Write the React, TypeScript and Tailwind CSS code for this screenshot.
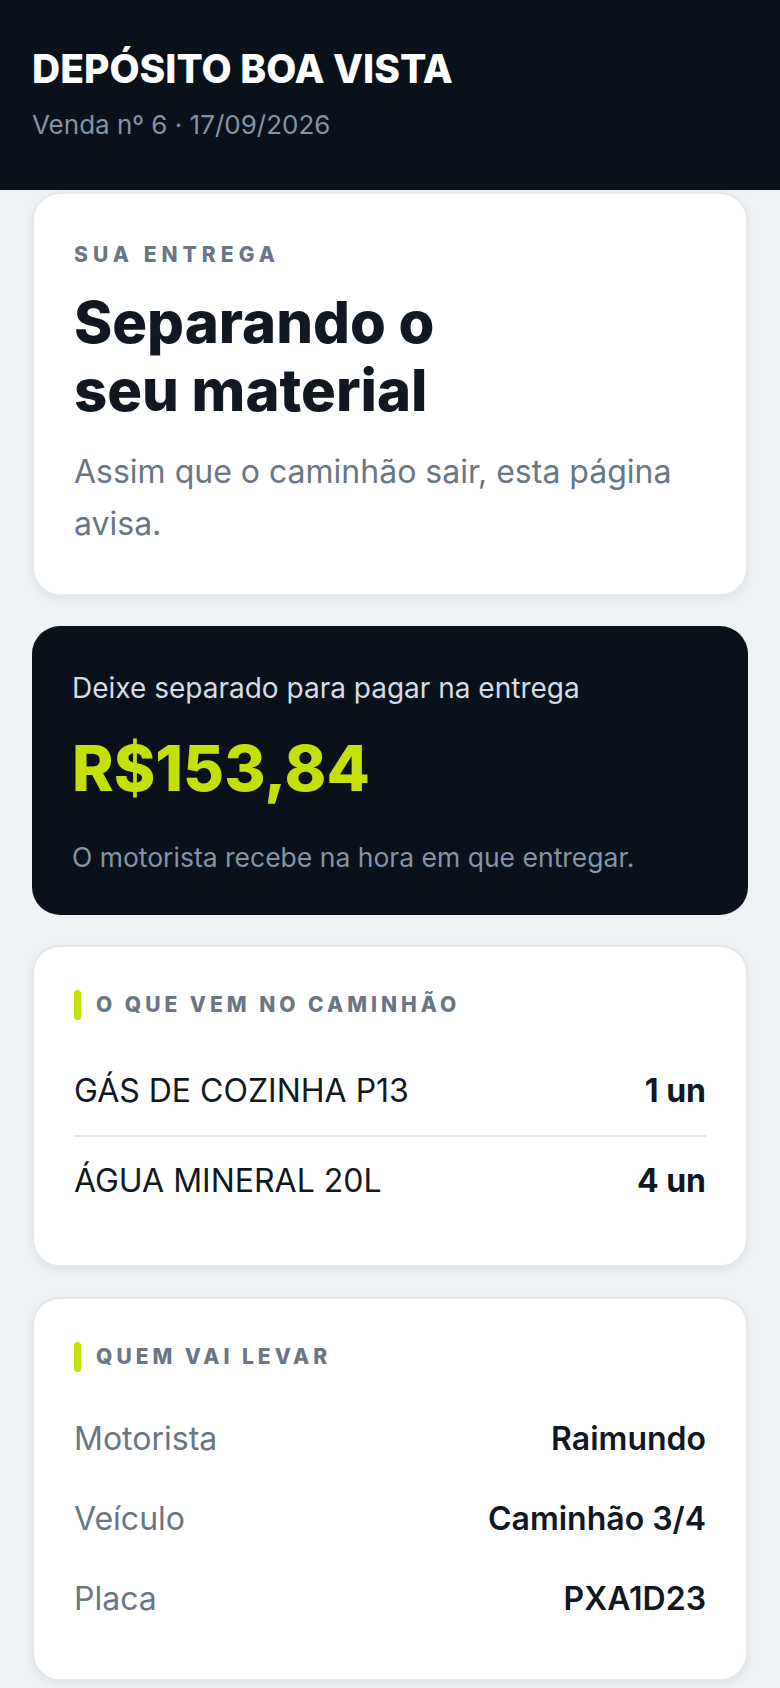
const items = [
  { name: "GÁS DE COZINHA P13", qty: "1 un" },
  { name: "ÁGUA MINERAL 20L", qty: "4 un" },
];

const driver = [
  { label: "Motorista", value: "Raimundo" },
  { label: "Veículo", value: "Caminhão 3/4" },
  { label: "Placa", value: "PXA1D23" },
];

function SectionLabel({ children }: { children: string }) {
  return (
    <div className="flex h-[36px] items-center gap-[15px]">
      <span className="h-[30px] w-[7px] rounded-full bg-[#c3e00a]" />
      <span className="text-[21px] leading-[36px] font-extrabold tracking-[0.19em] text-[#6a7683]">
        {children}
      </span>
    </div>
  );
}

export default function App() {
  return (
    <div className="min-h-[1688px] bg-[#eef2f5] font-['Inter','Noto_Sans',sans-serif]">
      <header className="h-[190px] bg-[#0a111a] px-8 pt-[46px]">
        <h1 className="text-[39px] leading-[46px] font-extrabold text-white">
          DEPÓSITO BOA VISTA
        </h1>
        <p className="mt-[16px] text-[26px] leading-[34px] text-[#8493a5]">
          Venda nº 6 · 17/09/2026
        </p>
      </header>

      <main className="flex flex-col gap-[30px] px-8 pt-[2px] pb-[6px]">
        <section className="rounded-[28px] border-2 border-[#e3e8ed] bg-white px-10 pt-[47px] pb-[44px] shadow-[0_3px_8px_rgba(16,24,40,0.07)]">
          <p className="text-[21px] leading-[28px] font-extrabold tracking-[0.24em] text-[#6a7683]">
            SUA ENTREGA
          </p>
          <h2 className="mt-[19px] text-[58px] leading-[68px] font-extrabold text-[#111821]">
            Separando o
            <br />
            seu material
          </h2>
          <p className="mt-[22px] text-[32px] leading-[52px] text-[#697684]">
            Assim que o caminhão sair, esta página avisa.
          </p>
        </section>

        <section className="rounded-[28px] bg-[#0a111a] px-10 pt-[44px] pb-[41px]">
          <p className="text-[28px] leading-[36px] text-[#d5dce5]">
            Deixe separado para pagar na entrega
          </p>
          <p className="mt-[26px] text-[63px] leading-[72px] font-extrabold text-[#c3e00a]">
            R$153,84
          </p>
          <p className="mt-[36px] text-[26.5px] leading-[34px] text-[#8594a7]">
            O motorista recebe na hora em que entregar.
          </p>
        </section>

        <section className="rounded-[28px] border-2 border-[#e3e8ed] bg-white px-10 pt-10 pb-10 shadow-[0_3px_8px_rgba(16,24,40,0.07)]">
          <SectionLabel>O QUE VEM NO CAMINHÃO</SectionLabel>
          <ul className="mt-6 divide-y-2 divide-[#e2e7ec]">
            {items.map((it) => (
              <li key={it.name} className="flex items-center justify-between py-6 text-[32px] leading-[40px] text-[#111821]">
                <span>{it.name}</span>
                <span className="font-bold">{it.qty}</span>
              </li>
            ))}
          </ul>
        </section>

        <section className="rounded-[28px] border-2 border-[#e3e8ed] bg-white px-10 pt-10 pb-10 shadow-[0_3px_8px_rgba(16,24,40,0.07)]">
          <SectionLabel>QUEM VAI LEVAR</SectionLabel>
          <dl className="mt-6">
            {driver.map((d) => (
              <div key={d.label} className="flex items-center justify-between py-5 text-[32px] leading-[40px]">
                <dt className="text-[#6a7683]">{d.label}</dt>
                <dd className="font-semibold text-[#111821]">{d.value}</dd>
              </div>
            ))}
          </dl>
        </section>
      </main>
    </div>
  );
}
